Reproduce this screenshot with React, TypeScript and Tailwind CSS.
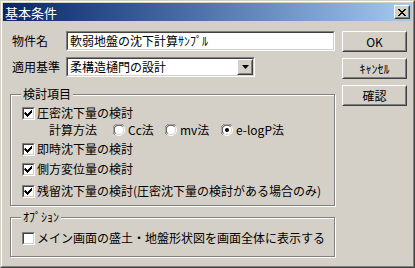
import React from 'react'

const FONT = "font-['Noto_Sans_CJK_JP','Noto_Sans',sans-serif]"

// Win2000 style raised frame (buttons)
function Raised({ className = '', children }: { className?: string; children?: React.ReactNode }) {
  return (
    <div className={`border border-t-white border-l-white border-r-[#404040] border-b-[#404040] bg-[#d4d0c8] ${className}`}>
      <div className="w-full h-full border border-t-[#d4d0c8] border-l-[#d4d0c8] border-r-[#808080] border-b-[#808080] flex items-center justify-center">
        {children}
      </div>
    </div>
  )
}

// sunken frame (text fields, checkboxes)
function Sunken({ className = '', children }: { className?: string; children?: React.ReactNode }) {
  return (
    <div className={`border border-t-[#808080] border-l-[#808080] border-r-white border-b-white ${className}`}>
      <div className="w-full h-full border border-t-[#404040] border-l-[#404040] border-r-[#d4d0c8] border-b-[#d4d0c8] bg-white flex items-center">
        {children}
      </div>
    </div>
  )
}

function Checkbox({ checked }: { checked: boolean }) {
  return (
    <Sunken className="w-[13px] h-[13px] shrink-0">
      {checked && (
        <svg width="9" height="9" viewBox="0 0 9 9" className="block">
          <path d="M1 3h1v1h1v1h1v-1h1v-1h1v-1h1v-1h1v3h-1v1h-1v1h-1v1h-1v1h-1v-1h-1v-1h-1v-1h-1z" fill="#000" />
        </svg>
      )}
    </Sunken>
  )
}

function Radio({ checked }: { checked: boolean }) {
  return (
    <svg width="12" height="12" viewBox="0 0 12 12" className="block shrink-0">
      <path d="M10.5 1.5A6 6 0 0 0 1.5 10.5" stroke="#808080" strokeWidth="1" fill="none" />
      <circle cx="6" cy="6" r="5.5" fill="none" stroke="#fff" />
      <path d="M1.5 10.5A6 6 0 0 1 10.5 1.5" stroke="#808080" fill="none" />
      <path d="M9.5 2.5A4.6 4.6 0 0 0 2.5 9.5" stroke="#404040" fill="none" />
      <circle cx="6" cy="6" r="4" fill="#fff" />
      {checked && <circle cx="6" cy="6" r="2" fill="#000" />}
    </svg>
  )
}

function Group({ label, className = '', children }: { label: string; className?: string; children?: React.ReactNode }) {
  return (
    <div className={`relative border border-[#808080] shadow-[inset_1px_1px_0_#fff,1px_1px_0_#fff] ${className}`}>
      <span className="absolute left-[10px] top-[-9px] bg-[#d4d0c8] px-[2px] leading-[16px]">{label}</span>
      {children}
    </div>
  )
}

function CheckRow({ label, checked, className = '' }: { label: string; checked: boolean; className?: string }) {
  return (
    <div className={`h-[18px] flex items-center gap-[2px] ${className}`}>
      <Checkbox checked={checked} />
      <span className="whitespace-nowrap leading-none">{label}</span>
    </div>
  )
}

export default function App() {
  return (
    <div className={`w-[415px] h-[268px] bg-[#d4d0c8] text-black text-[12px] ${FONT} border border-t-[#d4d0c8] border-l-[#d4d0c8] border-r-[#404040] border-b-[#404040]`}>
      <div className="w-full h-full border border-t-white border-l-white border-r-[#808080] border-b-[#808080] p-[1px]">
        {/* Title bar */}
        <div className="h-[18px] flex items-center justify-between bg-gradient-to-r from-[#0a246a] to-[#a6caf0] pl-[2px] pr-[2px]">
          <span className="text-white text-[13px] leading-none">基本条件</span>
          <Raised className="w-[16px] h-[14px]">
            <svg width="8" height="7" viewBox="0 0 8 7" className="block">
              <path d="M0 0h2v1h1v1h2v-1h1v-1h2v1h-1v1h-1v1h-1v1h1v1h1v1h1v1h-2v-1h-1v-1h-2v1h-1v1h-2v-1h1v-1h1v-1h1v-1h-1v-1h-1v-1h-1z" fill="#000" />
            </svg>
          </Raised>
        </div>

        {/* Body */}
        <div className="flex pt-[10px] pl-[7px] gap-[7px]">
          <div className="w-[325px]">
            <div className="flex items-center h-[20px]">
              <span className="w-[56px] pl-[2px] whitespace-nowrap">物件名</span>
              <Sunken className="w-[269px] h-[20px]">
                <span className="pl-[2px] whitespace-nowrap leading-none">軟弱地盤の沈下計算ｻﾝﾌﾟﾙ</span>
              </Sunken>
            </div>
            <div className="flex items-center h-[20px] mt-[6px]">
              <span className="w-[56px] pl-[2px] whitespace-nowrap">適用基準</span>
              <Sunken className="w-[189px] h-[20px]">
                <span className="pl-[2px] flex-1 whitespace-nowrap leading-none">柔構造樋門の設計</span>
                <Raised className="w-[16px] h-[16px]">
                  <svg width="7" height="4" viewBox="0 0 7 4" className="block">
                    <path d="M0 0h7L3.5 4z" fill="#000" />
                  </svg>
                </Raised>
              </Sunken>
            </div>

            <Group label="検討項目" className="mt-[17px] h-[112px] pl-[11px] pt-[9px]">
              <CheckRow label="圧密沈下量の検討" checked />
              <div className="h-[18px] flex items-center ml-[27px] mt-[-1px] whitespace-nowrap">
                <span className="w-[64px] leading-none">計算方法</span>
                <div className="w-[52px] flex items-center gap-[3px]">
                  <Radio checked={false} />
                  <span className="leading-none">Cc法</span>
                </div>
                <div className="w-[56px] flex items-center gap-[3px]">
                  <Radio checked={false} />
                  <span className="leading-none">mv法</span>
                </div>
                <div className="flex items-center gap-[3px]">
                  <Radio checked />
                  <span className="leading-none">e-logP法</span>
                </div>
              </div>
              <CheckRow label="即時沈下量の検討" checked className="mt-[1px]" />
              <CheckRow label="側方変位量の検討" checked className="mt-[2px]" />
              <CheckRow label="残留沈下量の検討(圧密沈下量の検討がある場合のみ)" checked className="mt-[4px]" />
            </Group>

            <Group label="ｵﾌﾟｼｮﾝ" className="mt-[11px] h-[40px] pl-[11px] pt-[11px]">
              <CheckRow label="メイン画面の盛土・地盤形状図を画面全体に表示する" checked={false} />
            </Group>
          </div>

          <div className="flex flex-col gap-[6px]">
            <Raised className="w-[65px] h-[21px]">
              <span className="leading-none">OK</span>
            </Raised>
            <Raised className="w-[65px] h-[21px]">
              <span className="leading-none">ｷｬﾝｾﾙ</span>
            </Raised>
            <Raised className="w-[65px] h-[21px]">
              <span className="leading-none">確認</span>
            </Raised>
          </div>
        </div>
      </div>
    </div>
  )
}
